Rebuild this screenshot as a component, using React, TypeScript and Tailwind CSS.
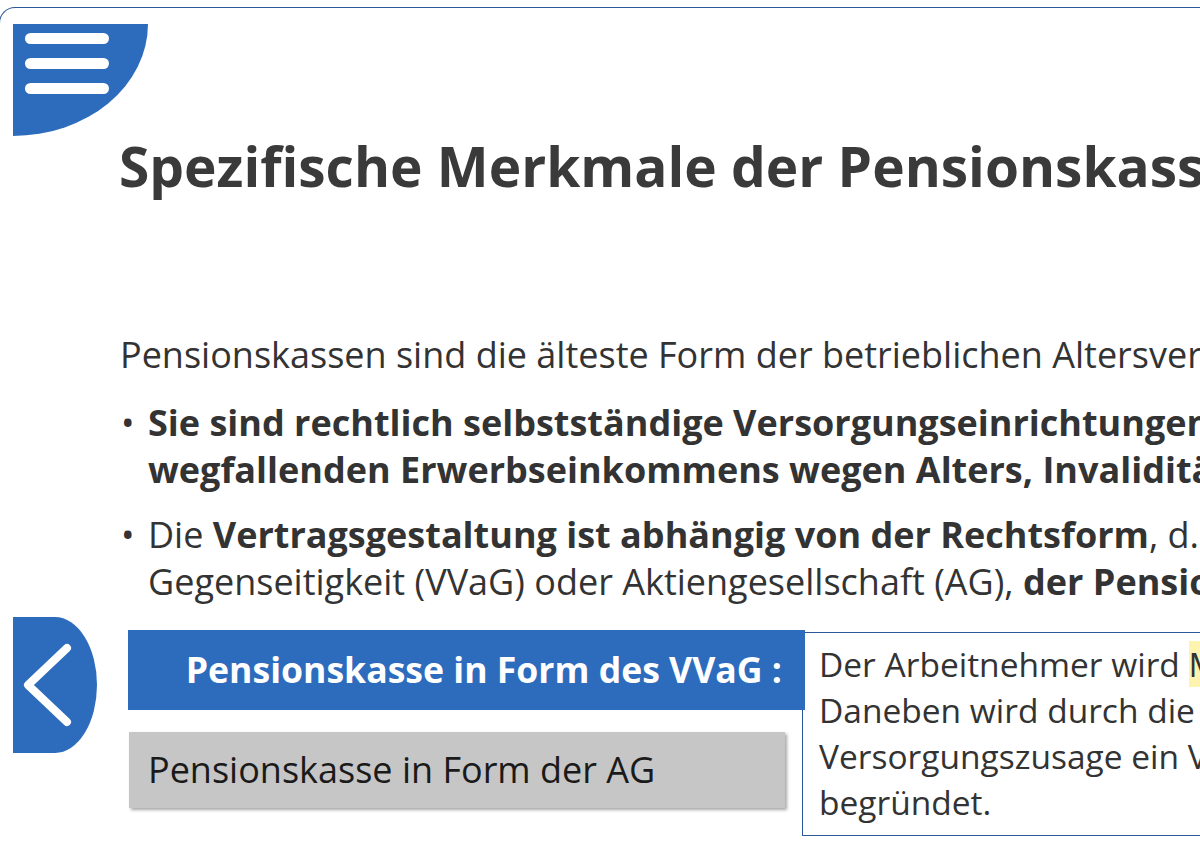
import React from 'react';

function MenuButton() {
    return (
        <div className="ml-[13px] flex h-[112px] w-[135px] flex-col gap-[14px] rounded-br-[100%] bg-[#2d6cbd] pl-[12px] pt-[9px]">
            <span className="h-[11px] w-[84px] rounded-full bg-white" />
            <span className="h-[11px] w-[84px] rounded-full bg-white" />
            <span className="h-[11px] w-[84px] rounded-full bg-white" />
        </div>
    );
}

function BackButton() {
    return (
        <div className="ml-[13px] flex h-[136px] w-[84px] shrink-0 items-center rounded-r-[100%] bg-[#2d6cbd]">
            <svg width="84" height="136" viewBox="0 0 84 136">
                <path d="M54 31 L15 68 L54 105" fill="none" stroke="#fff" strokeWidth="8" strokeLinecap="round" strokeLinejoin="round" />
            </svg>
        </div>
    );
}

export default function App() {
    return (
        <div className="relative h-[846px] w-[1200px] overflow-hidden bg-white font-['Open_Sans',sans-serif] text-[#333]">
            <div className="-ml-px mt-[7px] h-[900px] w-[1900px] rounded-tl-[16px] border-l border-t border-[#2b5797] pt-[16px]">
                <MenuButton />

                <h1 className="-mt-[2px] whitespace-nowrap pl-[119px] text-[55px] font-bold leading-[64px] text-[#3a3a3a]">
                    Spezifische Merkmale der Pensionskasse
                </h1>

                <div className="mt-[133px] whitespace-nowrap pl-[120px] text-[36px] leading-[47px]">
                    <p>Pensionskassen sind die älteste Form der betrieblichen Altersversorgung.</p>
                    <ul className="mt-[21px] flex flex-col gap-[18px]">
                        <li className="flex">
                            <span className="w-[28px] shrink-0 pl-[1px]">•</span>
                            <span className="font-bold">
                                Sie sind rechtlich selbstständige Versorgungseinrichtungen, die zum Ersatz des
                                <br />
                                wegfallenden Erwerbseinkommens wegen Alters, Invalidität oder Tod Leistungen erbringen.
                            </span>
                        </li>
                        <li className="flex">
                            <span className="w-[28px] shrink-0 pl-[1px]">•</span>
                            <span>
                                Die <b>Vertragsgestaltung ist abhängig von der Rechtsform</b>, d. h. Versicherungsverein auf
                                <br />
                                Gegenseitigkeit (VVaG) oder Aktiengesellschaft (AG), <b>der Pensionskasse</b>.
                            </span>
                        </li>
                    </ul>
                </div>

                <div className="mt-[12px] flex items-start">
                    <BackButton />
                    <div className="relative z-10 ml-[31px] mt-[13px] flex w-[677px] shrink-0 flex-col gap-[22px]">
                        <div className="flex h-[80px] items-center justify-end whitespace-nowrap bg-[#2d6cbd] pr-[23px] text-[35.6px] font-bold text-white">
                            Pensionskasse in Form des VVaG :
                        </div>
                        <div className="ml-px flex h-[76px] w-[656px] items-center whitespace-nowrap bg-[#c6c6c6] pl-[19px] text-[36px] text-[#1a1a1a] shadow-[2px_2px_3px_rgba(0,0,0,0.35)]">
                            Pensionskasse in Form der AG
                        </div>
                    </div>
                    <div className="-ml-[3px] mt-[15px] h-[204px] w-[800px] whitespace-nowrap border border-[#2b5797] pl-[16px] pt-[8px] text-[33.5px] leading-[46px]">
                        Der Arbeitnehmer wird <span className="bg-[#fff3b0]">Mitglied</span> der Pensionskasse.
                        <br />
                        Daneben wird durch die Pensionskasse ein
                        <br />
                        Versorgungszusage ein Versicherungsverhältnis
                        <br />
                        begründet.
                    </div>
                </div>
            </div>
        </div>
    );
}
